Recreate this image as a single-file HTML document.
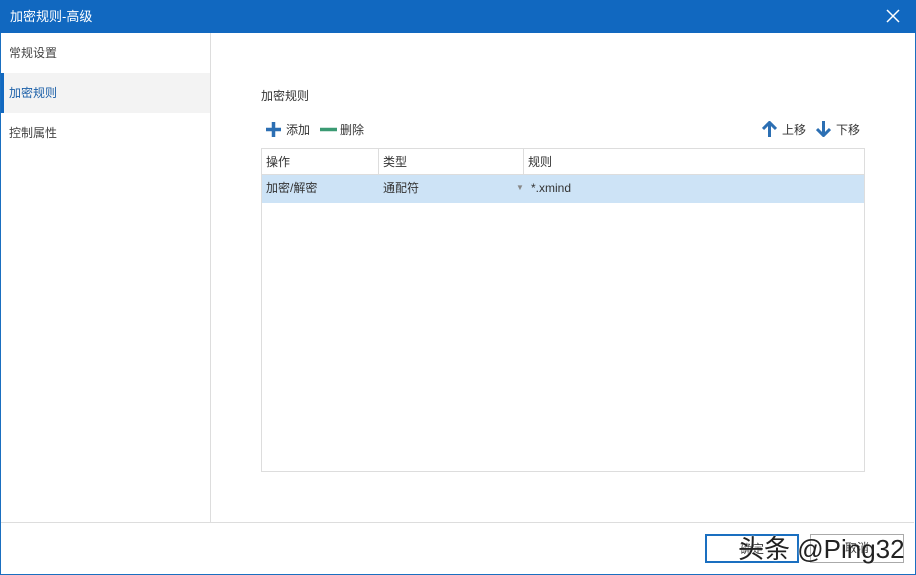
<!DOCTYPE html><html><head><meta charset="utf-8"><style>
*{margin:0;padding:0;box-sizing:border-box}
body{width:916px;height:575px;overflow:hidden;background:#fff;font-family:"Liberation Sans","Noto Sans CJK SC",sans-serif;font-size:12px;color:#333;position:relative}
.win{position:absolute;inset:0;border:1px solid #1a6fc0;border-top:none}
.title{position:absolute;left:0;top:0;width:916px;height:33px;background:#1168c0;color:#fff;font-size:13px;line-height:33px;padding-left:10px}
.close{position:absolute;right:16px;top:9px;width:14px;height:14px}
.side{position:absolute;left:1px;top:33px;width:210px;height:490px;border-right:1px solid #ddd}
.item{height:40px;line-height:40px;padding-left:8px;font-size:12px;color:#444}
.item.act{background:#f3f3f3;border-left:3px solid #1168c0;padding-left:5px;color:#1a5fa8}
.a{position:absolute}
.grid{position:absolute;left:261px;top:148px;width:604px;height:324px;border:1px solid #ddd}
.hd{position:absolute;top:0;height:26px;line-height:26px;border-right:1px solid #ddd;border-bottom:1px solid #ddd;padding-left:4px}
.row{position:absolute;left:0;top:26px;width:602px;height:28px;background:#cde3f6;line-height:26px}
.foot{position:absolute;left:1px;top:522px;width:913px;height:1px;background:#ddd}
.btn{position:absolute;top:534px;height:29px;width:94px;border:1px solid #aaa;text-align:center;line-height:27px}
</style></head><body>
<div class="win"></div>
<div class="title">加密规则-高级
<svg class="close" viewBox="0 0 14 14"><path d="M1 1L13 13M13 1L1 13" stroke="#fff" stroke-width="1.5"/></svg></div>
<div class="side">
<div class="item">常规设置</div>
<div class="item act">加密规则</div>
<div class="item">控制属性</div>
</div>
<div class="a" style="left:261px;top:87px">加密规则</div>
<svg class="a" style="left:265px;top:121px" width="17" height="17"><path d="M8.5 1V16M1 8.5H16" stroke="#2c6fb3" stroke-width="3.5"/></svg>
<div class="a" style="left:286px;top:121px">添加</div>
<svg class="a" style="left:320px;top:121px" width="17" height="17"><path d="M0 8.5H17" stroke="#3b9a73" stroke-width="3.5"/></svg>
<div class="a" style="left:340px;top:121px">删除</div>
<svg class="a" style="left:762px;top:121px" width="15" height="16"><path d="M7.5 16V2M1 8L7.5 1.5L14 8" stroke="#2c6fb3" stroke-width="3" fill="none"/></svg>
<div class="a" style="left:782px;top:121px">上移</div>
<svg class="a" style="left:816px;top:121px" width="15" height="16"><path d="M7.5 0V14M1 8L7.5 14.5L14 8" stroke="#2c6fb3" stroke-width="3" fill="none"/></svg>
<div class="a" style="left:836px;top:121px">下移</div>
<div class="grid">
<div class="hd" style="left:0;width:117px">操作</div>
<div class="hd" style="left:117px;width:145px">类型</div>
<div class="hd" style="left:262px;width:340px;border-right:none">规则</div>
<div class="row"><span class="a" style="left:4px">加密/解密</span><span class="a" style="left:121px">通配符</span><span class="a" style="left:254px;font-size:8px;color:#888">▼</span><span class="a" style="left:269px">*.xmind</span></div>
</div>
<div class="foot"></div>
<div class="btn" style="left:705px;border:2px solid #1a6fc0">确定</div>
<div class="btn" style="left:810px">取消</div>
<div class="a" style="left:738px;top:529px;font-size:26px;color:#222;text-shadow:0 0 2px #fff">头条 @Ping32</div>
</body></html>
